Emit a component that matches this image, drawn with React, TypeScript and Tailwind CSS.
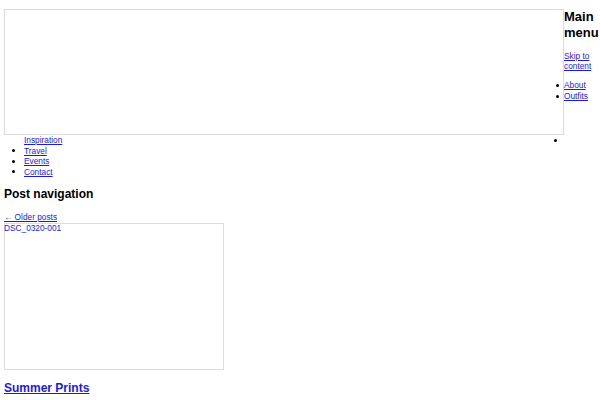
import React from 'react';

const link = 'text-[#1a1ae6] underline';

export default function App() {
  return (
    <div className="w-[600px] h-[400px] overflow-hidden bg-white text-black font-['Liberation_Sans',Arial,sans-serif] text-[8.3px] leading-[10.5px]">
      {/* Header: broken banner + main menu */}
      <div className="flex">
        <div className="ml-[4px] mt-[9px] w-[560px] h-[126px] border border-[#dcdcdc] shrink-0" />
        <div className="w-[36px] shrink-0">
          <h2 className="mt-[9px] text-[13px] leading-[16px] font-bold">Main menu</h2>
          <a href="#content" className={`block mt-[10px] leading-[10px] ${link}`}>
            Skip to content
          </a>
          <ul className="mt-[9px]">
            <li className="relative">
              <span className="absolute -left-[8px] top-[4px] w-[3px] h-[3px] rounded-full bg-black" />
              <a href="#" className={link}>About</a>
            </li>
            <li className="relative">
              <span className="absolute -left-[8px] top-[4px] w-[3px] h-[3px] rounded-full bg-black" />
              <a href="#" className={link}>Outfits</a>
            </li>
          </ul>
        </div>
      </div>

      {/* Menu continues under the float */}
      <ul>
        <li className="flex items-center">
          <a href="#" className={`ml-[24px] ${link}`}>Inspiration</a>
          <span className="ml-auto mr-[43px] w-[3px] h-[3px] rounded-full bg-black" />
        </li>
        {['Travel', 'Events', 'Contact'].map((t) => (
          <li key={t} className="flex items-center">
            <span className="ml-[12px] mr-[9px] w-[3px] h-[3px] rounded-full bg-black" />
            <a href="#" className={link}>{t}</a>
          </li>
        ))}
      </ul>

      <h2 className="ml-[4px] mt-[10px] text-[12px] leading-[15px] font-bold">Post navigation</h2>
      <a href="#" className={`block ml-[4px] mt-[10px] ${link}`}>← Older posts</a>

      <article className="ml-[4px]">
        <div className="w-[220px] h-[147px] border border-[#dcdcdc]">
          <span className="block -mt-[1px] -ml-[1px] text-[#1a1ae6]">DSC_0320-001</span>
        </div>
        <h2 className="mt-[11px] text-[12px] leading-[15px] font-bold">
          <a href="#" className={link}>Summer Prints</a>
        </h2>
      </article>
    </div>
  );
}
